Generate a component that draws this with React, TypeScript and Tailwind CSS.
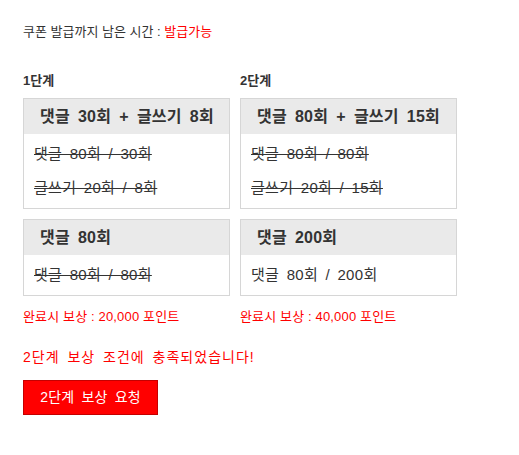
import React from "react";

type Line = { text: string; done: boolean };

function Box({ title, lines, wide }: { title: string; lines: Line[]; wide: boolean }) {
  return (
    <div className={`border border-[#d6d6d6] ${wide ? "w-[217px]" : "w-[207px]"}`}>
      <div className="h-[35px] bg-[#eaeaea] flex items-center pl-[16px] text-[16px] tracking-[0.2px] [word-spacing:3.5px] font-bold text-[#333]">
        {title}
      </div>
      <div className="px-[10px] py-[3px] text-[15px] tracking-[0.3px] [word-spacing:3px] text-[#333]">
        {lines.map((l, i) => (
          <div key={i} className={l.done ? "leading-[34px] line-through" : "leading-[34px]"}>
            {l.text}
          </div>
        ))}
      </div>
    </div>
  );
}

function Stage({
  label,
  wide,
  first,
  second,
  reward,
}: {
  label: string;
  wide: boolean;
  first: { title: string; lines: Line[] };
  second: { title: string; lines: Line[] };
  reward: string;
}) {
  return (
    <div className="flex flex-col">
      <div className="text-[13px] leading-[14px] font-bold text-[#333] mb-[10px]">{label}</div>
      <Box wide={wide} title={first.title} lines={first.lines} />
      <div className="mt-[10px]">
        <Box wide={wide} title={second.title} lines={second.lines} />
      </div>
      <div className="mt-[14px] text-[13px] leading-[14px] tracking-[0.15px] text-[#ff0000]">{reward}</div>
    </div>
  );
}

export default function App() {
  return (
    <div className="bg-white min-h-[455px] pt-[25px] pl-[23px] font-['Liberation_Sans','Noto_Sans_CJK_KR',sans-serif]">
      <div className="text-[13px] leading-[14px] text-[#333]">
        쿠폰 발급까지 남은 시간 : <span className="text-[#ff0000]">발급가능</span>
      </div>
      <div className="flex gap-[10px] mt-[35px]">
        <Stage
          label="1단계"
          wide={false}
          first={{
            title: "댓글 30회 + 글쓰기 8회",
            lines: [
              { text: "댓글 80회 / 30회", done: true },
              { text: "글쓰기 20회 / 8회", done: true },
            ],
          }}
          second={{ title: "댓글 80회", lines: [{ text: "댓글 80회 / 80회", done: true }] }}
          reward="완료시 보상 : 20,000 포인트"
        />
        <Stage
          label="2단계"
          wide={true}
          first={{
            title: "댓글 80회 + 글쓰기 15회",
            lines: [
              { text: "댓글 80회 / 80회", done: true },
              { text: "글쓰기 20회 / 15회", done: true },
            ],
          }}
          second={{ title: "댓글 200회", lines: [{ text: "댓글 80회 / 200회", done: false }] }}
          reward="완료시 보상 : 40,000 포인트"
        />
      </div>
      <div className="mt-[25px] text-[14px] leading-[16px] tracking-[1px] [word-spacing:3px] text-[#ff0000]">
        2단계 보상 조건에 충족되었습니다!
      </div>
      <button className="mt-[15px] w-[135px] h-[35px] bg-[#ff0000] border border-[#c40000] text-white text-[14px] tracking-[0.2px] [word-spacing:3px] flex items-center justify-center">
        2단계 보상 요청
      </button>
    </div>
  );
}
